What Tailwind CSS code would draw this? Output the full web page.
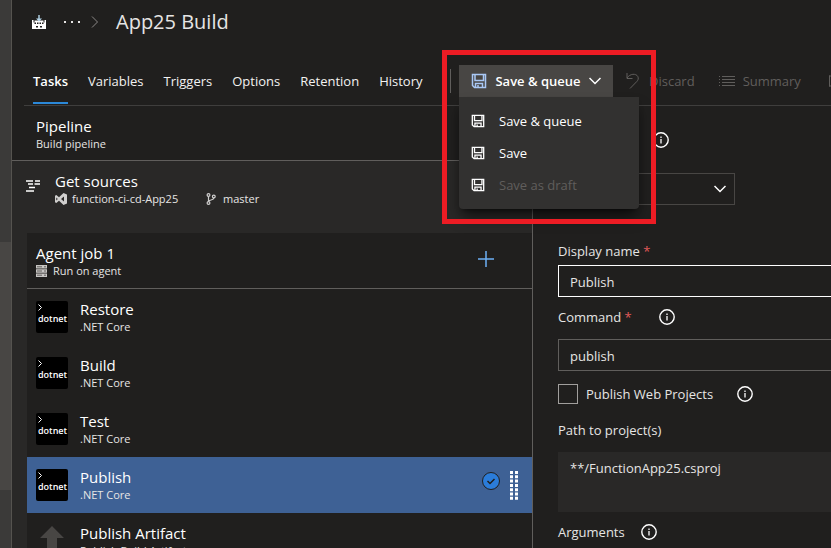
<!DOCTYPE html>
<html lang="en">

<head>
    <meta charset="UTF-8">
    <meta name="viewport" content="width=device-width, initial-scale=1.0">
    <script src="https://cdn.jsdelivr.net/npm/@tailwindcss/browser@4"></script>
    <title>App25 Build - Pipelines</title>
</head>

<body class="flex h-screen overflow-hidden bg-[#201f1e] font-['Open_Sans',sans-serif] text-[13px] leading-5 text-[#e6e5e4]">
    <!-- Shared icons -->
    <svg class="hidden">
        <symbol id="save" viewBox="0 0 16 16" fill="none" stroke="currentColor">
            <path d="M1.500 1.500h13v13h-11l-2-2zM4 1.500v6h8.500v-6M4.500 14.500v-4h7v4M7 12v2.500" stroke-width="1.500" />
        </symbol>
        <symbol id="chevron" viewBox="0 0 12 8" fill="none" stroke="currentColor">
            <path d="M.5 1 6 6.500 11.500 1" stroke-width="1.500" />
        </symbol>
        <symbol id="info" viewBox="0 0 16 16" fill="none" stroke="currentColor">
            <circle cx="8" cy="8" r="7.200" stroke-width="1.400" />
            <path d="M8 7v4.500M8 4.500V6" stroke-width="1.300" />
        </symbol>
    </svg>

    <!-- Scroll bar of the side menu -->
    <div class="flex w-3 shrink-0 flex-col border-r border-[#55534f] bg-[#3b3a39] pt-[242px]">
        <div class="h-[248px] bg-[#484644]"></div>
    </div>

    <div class="flex min-w-0 flex-1 flex-col">
        <header class="ml-3 border-b border-[#3f3e3d]">
            <!-- Breadcrumb -->
            <div class="flex h-11 items-center pl-2">
                <svg class="size-[14px]" viewBox="0 0 14 14" fill="#fff">
                    <path d="M0 5h1.500v2.500h11V5H14v9H0z" />
                    <path d="M2.500 5.500h9V8h-9z" />
                    <path d="M6.300 0h1.400v3.500H10L7 6.500l-3-3h2.300z" fill="#b5d6ea" />
                    <path d="M2.500 7.500h1.500V9H2.500zM5 7.500h1.500V9H5zM7.500 7.500H9V9H7.500zM10 7.500h1.500V9H10zM4 11h2v1.500H4zM8 11h2v1.500H8z" fill="#201f1e" />
                </svg>
                <button type="button" aria-label="More" class="ml-[18px]">
                    <svg class="h-4 w-4" viewBox="0 0 16 16" fill="#e6e5e4">
                        <path d="M0 7h2v2H0zM7 7h2v2H7zM14 7h2v2h-2z" />
                    </svg>
                </button>
                <svg class="ml-[11px] h-3 w-2" viewBox="0 0 8 12" fill="none" stroke="#8a8886">
                    <path d="M1 .5 6.500 6 1 11.500" />
                </svg>
                <h1 class="ml-[17px] text-[20px]">App25 Build</h1>
            </div>

            <div class="flex h-[61px]">
                <!-- Tabs -->
                <nav class="flex w-[426px] shrink-0 gap-5 pl-[9px] pt-[27px] text-[#f3f2f1]">
                    <a href="#" class="h-[33px] border-b-2 border-[#2b88d8] font-semibold text-white">Tasks</a>
                    <a href="#">Variables</a>
                    <a href="#">Triggers</a>
                    <a href="#">Options</a>
                    <a href="#">Retention</a>
                    <a href="#">History</a>
                </nav>
                <!-- Toolbar -->
                <div class="flex min-w-0 flex-1 items-start pt-[21px]">
                    <div class="mt-1 h-6 w-px shrink-0 bg-[#605e5c]"></div>
                    <div class="relative z-10 ml-2 w-[154px] shrink-0">
                        <button type="button" class="flex h-8 w-full items-center justify-between bg-[#484644] px-3 font-semibold text-white">
                            <svg class="size-4 text-[#a9c8f5]"><use href="#save" /></svg>
                            <span>Save &amp; queue</span>
                            <svg class="h-2 w-3"><use href="#chevron" /></svg>
                        </button>
                        <div role="menu" class="absolute left-0 top-8 w-[180px] rounded-b bg-[#323130] py-2 text-white shadow-lg shadow-black/60">
                            <button type="button" role="menuitem" class="flex h-8 w-full items-center gap-[14px] px-3">
                                <svg class="size-[14px]"><use href="#save" /></svg>Save &amp; queue
                            </button>
                            <button type="button" role="menuitem" class="flex h-8 w-full items-center gap-[14px] px-3">
                                <svg class="size-[14px]"><use href="#save" /></svg>Save
                            </button>
                            <button type="button" role="menuitem" disabled class="flex h-8 w-full items-center gap-[14px] px-3 text-[#605e5c]">
                                <svg class="size-[14px] text-white"><use href="#save" /></svg>Save as draft
                            </button>
                        </div>
                        <div class="pointer-events-none absolute -left-[17px] -top-[15px] h-[174px] w-[214px] border-[5px] border-[#ed1c24]"></div>
                    </div>
                    <button type="button" disabled class="ml-[13px] flex h-8 shrink-0 items-center gap-[9px] text-[#605e5c]">
                        <svg class="h-4 w-[14px]" viewBox="0 0 14 16" fill="none" stroke="currentColor">
                            <path d="M1 0v5.500h5.500M1 5C4 .5 10 .2 11.800 3.500c1 2 .4 3.500-1 5L4 15.500" />
                        </svg>
                        Discard
                    </button>
                    <button type="button" disabled class="ml-6 flex h-8 shrink-0 items-center gap-2 text-[#605e5c]">
                        <svg class="h-3 w-4" viewBox="0 0 16 12" stroke="currentColor">
                            <path d="M0 1.500h1M3 1.500h13M0 4.500h1M3 4.500h13M0 7.500h1M3 7.500h13M0 10.500h1M3 10.500h13" />
                        </svg>
                        Summary
                    </button>
                    <button type="button" disabled aria-label="Queue" class="ml-7 flex h-8 shrink-0 items-center text-[#605e5c]">
                        <svg class="h-3 w-3" viewBox="0 0 12 12" fill="none" stroke="currentColor">
                            <path d="M.5.5 11 6 .5 11.500z" />
                        </svg>
                    </button>
                </div>
            </div>
        </header>

        <main class="flex min-h-0 flex-1">
            <!-- Pipeline steps -->
            <section class="flex w-[521px] shrink-0 flex-col overflow-hidden border-r border-[#605e5c] bg-[#292827]">
                <div class="h-[55px] shrink-0 border-b border-[#605e5c] bg-[#201f1e] pl-6 pt-[10px]">
                    <h2 class="text-[15px] text-white">Pipeline</h2>
                    <p class="text-[11px] leading-4">Build pipeline</p>
                </div>
                <div class="flex h-[72px] shrink-0 pl-[14px] pt-[10px]">
                    <svg class="mt-[9px] h-3 w-[15px]" viewBox="0 0 15 12" stroke="#fff" stroke-width="1.500">
                        <path d="M0 1h7M9 1h5M2 4h5M8.500 4h5.500M3 7.500h6M0 11h8" />
                    </svg>
                    <div class="ml-[14px]">
                        <h2 class="text-[15px] text-white">Get sources</h2>
                        <div class="flex items-center text-[11px] leading-4">
                            <svg class="mr-[5px] size-3" viewBox="0 0 12 12" fill="#d0cfce" fill-rule="evenodd">
                                <path d="M8.500 0 12 1.500v9L8.500 12 4 7.800 1.300 10 0 9.200V2.800L1.300 2 4 4.200zM9 3.500 6 6l3 2.500zM1.300 4.500v3L2.800 6z" />
                            </svg>
                            <span class="w-[134px]">function-ci-cd-App25</span>
                            <svg class="mr-[7px] h-3 w-[10px]" viewBox="0 0 10 12" fill="none" stroke="#d0cfce" stroke-width="1.200">
                                <circle cx="2.500" cy="2" r="1.400" />
                                <circle cx="7.800" cy="3.500" r="1.400" />
                                <circle cx="2.500" cy="10" r="1.400" />
                                <path d="M2.500 3.500v5M7.800 5c0 2.500-4.800 1.500-5.200 3.500" />
                            </svg>
                            <span>master</span>
                        </div>
                    </div>
                </div>

                <div class="ml-[15px] bg-[#201f1e]">
                    <div class="flex h-14 items-center justify-between border-b border-[#605e5c] pb-1 pl-[9px] pr-[38px]">
                        <div class="pt-1">
                            <h2 class="text-[15px] text-white">Agent job 1</h2>
                            <div class="flex items-center gap-[6px] text-[11px] leading-4">
                                <svg class="h-3 w-[11px]" viewBox="0 0 11 12">
                                    <path d="M0 0h11v3.500H0zM0 4.200h11v3.500H0zM0 8.400h11V12H0z" fill="#c8c6c4" />
                                    <path d="M1 1.800h5M1 6h5M1 10.200h5M8 1.800h2M8 6h2M8 10.200h2" stroke="#605e5c" />
                                </svg>
                                Run on agent
                            </div>
                        </div>
                        <button type="button" aria-label="Add a task" class="text-[#6cb0f5]">
                            <svg class="size-4" viewBox="0 0 16 16" stroke="currentColor" stroke-width="1.500">
                                <path d="M8 0v16M0 8h16" />
                            </svg>
                        </button>
                    </div>

                    <div class="flex h-14 items-center gap-3 pl-[9px]">
                        <div class="size-8 rounded-xs bg-black pl-[2px] pt-[3px] text-[9px] font-semibold leading-3 text-white">
                            <svg class="h-[7px] w-1" viewBox="0 0 4 7" fill="none" stroke="#fff"><path d="M.5.5l3 3-3 3" /></svg>
                            <span class="block leading-4">dotnet</span>
                        </div>
                        <div>
                            <h3 class="text-[15px] text-white">Restore</h3>
                            <p class="text-[11px] leading-4">.NET Core</p>
                        </div>
                    </div>
                    <div class="flex h-14 items-center gap-3 pl-[9px]">
                        <div class="size-8 rounded-xs bg-black pl-[2px] pt-[3px] text-[9px] font-semibold leading-3 text-white">
                            <svg class="h-[7px] w-1" viewBox="0 0 4 7" fill="none" stroke="#fff"><path d="M.5.5l3 3-3 3" /></svg>
                            <span class="block leading-4">dotnet</span>
                        </div>
                        <div>
                            <h3 class="text-[15px] text-white">Build</h3>
                            <p class="text-[11px] leading-4">.NET Core</p>
                        </div>
                    </div>
                    <div class="flex h-14 items-center gap-3 pl-[9px]">
                        <div class="size-8 rounded-xs bg-black pl-[2px] pt-[3px] text-[9px] font-semibold leading-3 text-white">
                            <svg class="h-[7px] w-1" viewBox="0 0 4 7" fill="none" stroke="#fff"><path d="M.5.5l3 3-3 3" /></svg>
                            <span class="block leading-4">dotnet</span>
                        </div>
                        <div>
                            <h3 class="text-[15px] text-white">Test</h3>
                            <p class="text-[11px] leading-4">.NET Core</p>
                        </div>
                    </div>
                    <!-- Selected task -->
                    <div class="flex h-14 items-center gap-3 bg-[#3e6195] pl-[9px] pr-[14px]">
                        <div class="size-8 rounded-xs bg-black pl-[2px] pt-[3px] text-[9px] font-semibold leading-3 text-white">
                            <svg class="h-[7px] w-1" viewBox="0 0 4 7" fill="none" stroke="#fff"><path d="M.5.5l3 3-3 3" /></svg>
                            <span class="block leading-4">dotnet</span>
                        </div>
                        <div class="flex-1">
                            <h3 class="text-[15px] text-white">Publish</h3>
                            <p class="text-[11px] leading-4">.NET Core</p>
                        </div>
                        <svg class="-mt-2 size-[18px]" viewBox="0 0 18 18" fill="none" stroke="#201f1e">
                            <circle cx="9" cy="9" r="8.500" fill="#2b7cd9" />
                            <path d="M5.500 9 8 11.500l4.500-4.500" stroke-width="1.500" />
                        </svg>
                        <svg class="-ml-[2px] h-[29px] w-2" viewBox="0 0 8 29" stroke="#fff" stroke-width="3" stroke-dasharray="3 1.300">
                            <path d="M1.500 0v29M6.500 0v29" />
                        </svg>
                    </div>
                    <div class="flex h-14 items-center gap-3 pl-[9px]">
                        <svg class="size-8" viewBox="0 0 32 32" fill="#484644"><path d="M16 1 28 13h-7v18H11V13H4z" /></svg>
                        <div>
                            <h3 class="text-[15px] text-white">Publish Artifact</h3>
                            <p class="text-[11px] leading-4">Publish Build Artifacts</p>
                        </div>
                    </div>
                </div>
            </section>

            <!-- Task settings -->
            <form class="min-w-0 flex-1 overflow-hidden pl-[25px] pt-6">
                <div class="flex h-5 items-center">
                    <label for="version" class="w-[95px]">Task version</label>
                    <svg class="size-4 text-white"><use href="#info" /></svg>
                </div>
                <div class="relative mt-[23px] w-[177px]">
                    <select id="version" class="h-8 w-full appearance-none border border-[#484644] bg-transparent px-3">
                        <option>2.*</option>
                    </select>
                    <svg class="pointer-events-none absolute right-[9px] top-3 h-2 w-3 text-white"><use href="#chevron" /></svg>
                </div>

                <label for="name" class="mt-9 block">Display name <span class="text-[#e05a5a]">*</span></label>
                <input id="name" type="text" value="Publish" class="mt-1 block h-8 w-[400px] border border-white px-[11px] pt-[2px]">

                <div class="mt-[10px] flex h-5 items-center">
                    <label for="command" class="w-[101px]">Command <span class="text-[#e05a5a]">*</span></label>
                    <svg class="size-4 text-white"><use href="#info" /></svg>
                </div>
                <input id="command" type="text" value="publish" class="mt-3 block h-8 w-[400px] border border-[#605e5c] px-[11px] pt-[2px]">

                <div class="mt-[13px] flex items-center">
                    <input id="web" type="checkbox" class="size-5 appearance-none border border-[#a19f9d]">
                    <label for="web" class="w-[159px] pl-2">Publish Web Projects</label>
                    <svg class="size-4 text-white"><use href="#info" /></svg>
                </div>

                <label for="path" class="mt-4 block">Path to project(s)</label>
                <textarea id="path" class="mt-3 block h-[60px] w-[400px] resize-none bg-[#292827] px-3 py-[6px]">**/FunctionApp25.csproj</textarea>

                <div class="mt-[10px] flex h-5 items-center">
                    <label for="arguments" class="w-[83px]">Arguments</label>
                    <svg class="size-4 text-white"><use href="#info" /></svg>
                </div>
                <textarea id="arguments" class="mt-3 block h-[60px] w-[400px] resize-none bg-[#292827] px-3 py-[6px]"></textarea>
            </form>
        </main>
    </div>
</body>

</html>
